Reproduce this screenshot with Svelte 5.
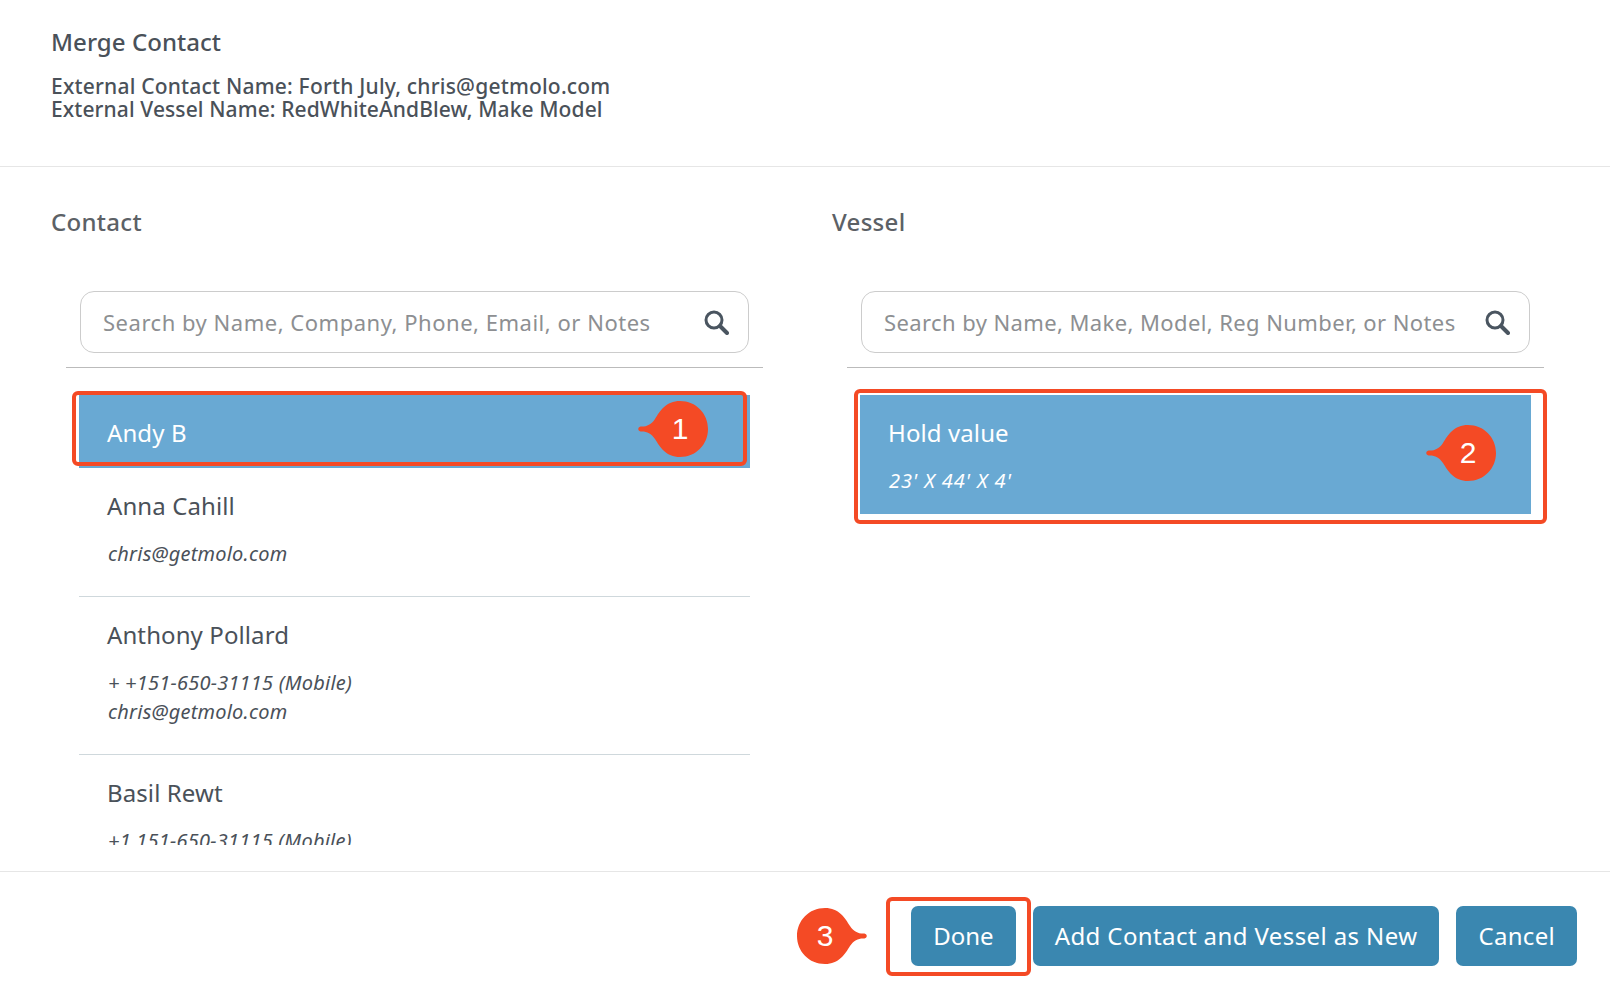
<script>
  const contacts = [
    { name: 'Andy B', lines: [], sel: true },
    { name: 'Anna Cahill', lines: ['chris@getmolo.com'] },
    { name: 'Anthony Pollard', lines: ['+ +151-650-31115 (Mobile)', 'chris@getmolo.com'] },
    { name: 'Basil Rewt', lines: ['+1 151-650-31115 (Mobile)'] }
  ];
  const bubbles = [
    { n: 1, x: 638, y: 401, flip: false },
    { n: 2, x: 1426, y: 425, flip: false },
    { n: 3, x: 797, y: 908, flip: true }
  ];
  const boxes = [
    { x: 72, y: 391, w: 675, h: 75 },
    { x: 854, y: 389, w: 693, h: 135 },
    { x: 886, y: 897, w: 145, h: 79 }
  ];
</script>

<div class="page">
  <header class="head">
    <h1>Merge Contact</h1>
    <p>External Contact Name: Forth July, chris@getmolo.com<br /><span class="second">External Vessel Name: RedWhiteAndBlew, Make Model</span></p>
  </header>

  <main class="cols">
    <section class="col">
      <h2>Contact</h2>
      <div class="search">
        <span class="ph contact-ph">Search by Name, Company, Phone, Email, or Notes</span>
        <svg width="26" height="26" viewBox="0 0 26 26" fill="none" stroke="#4a5560"><circle cx="11" cy="11" r="8" stroke-width="3"/><path d="M17 17l7 7" stroke-width="4" stroke-linecap="round"/></svg>
      </div>
      <div class="rule"></div>
      <ul class="list">
        {#each contacts as c}
          <li class:sel={c.sel} class:plain={!c.sel}>
            <div class="name">{c.name}</div>
            {#if c.lines.length}
              <div class="meta">{#each c.lines as l}<div>{l}</div>{/each}</div>
            {/if}
          </li>
        {/each}
      </ul>
    </section>
    <section class="col">
      <h2>Vessel</h2>
      <div class="search">
        <span class="ph vessel-ph">Search by Name, Make, Model, Reg Number, or Notes</span>
        <svg width="26" height="26" viewBox="0 0 26 26" fill="none" stroke="#4a5560"><circle cx="11" cy="11" r="8" stroke-width="3"/><path d="M17 17l7 7" stroke-width="4" stroke-linecap="round"/></svg>
      </div>
      <div class="rule"></div>
      <ul class="list">
        <li class="sel vessel">
          <div class="name">Hold value</div>
          <div class="meta dims"><div>23' X 44' X 4'</div></div>
        </li>
      </ul>
    </section>
  </main>

  <footer class="foot">
    <button class="done">Done</button>
    <button class="add">Add Contact and Vessel as New</button>
    <button class="cancel">Cancel</button>
  </footer>

  {#each boxes as b}
    <div class="box" style="left:{b.x}px;top:{b.y}px;width:{b.w}px;height:{b.h}px"></div>
  {/each}
  {#each bubbles as b}
    <div class="bubble" style="left:{b.x}px;top:{b.y}px">
      <svg width="70" height="56" viewBox="0 0 70 56" class:flip={b.flip}>
        <path fill="#f44a25" d="M42 0C58 0 70 12.500 70 28S58 56 42 56C28 56 22 46 17 38C13 32 8 30 2.500 30.500C-.5 29.500-.5 26.500 2.500 25.500C8 26 13 24 17 18C22 10 28 0 42 0Z"/>
      </svg>
      <span class:left={b.flip}>{b.n}</span>
    </div>
  {/each}
</div>

<style>
  :global(body) { margin: 0; background: #fff; }
  .page {
    position: relative;
    width: 1610px;
    height: 996px;
    overflow: hidden;
    display: flex;
    flex-direction: column;
    font-family: "Noto Sans", sans-serif;
    color: #4a5159;
  }
  .head {
    height: 167px;
    box-sizing: border-box;
    padding: 26px 51px 0;
    border-bottom: 1px solid #e6e6e6;
    flex: none;
  }
  h1 { margin: 0; font-size: 24px; line-height: 32px; font-weight: 500; letter-spacing: 0.05px; }
  p { margin: 17px 0 0; font-size: 21px; line-height: 23px; font-weight: 500; letter-spacing: 0.2px; }
  .second { letter-spacing: 0.1px; }
  .cols {
    flex: none;
    height: 705px;
    overflow: hidden;
    display: flex;
    box-sizing: border-box;
    padding: 0 0 0 51px;
    gap: 69px;
    border-bottom: 1px solid #e6e6e6;
  }
  .col { width: 712px; flex: none; }
  h2 { margin: 38px 0 0; font-size: 24px; line-height: 34px; font-weight: 500; color: #5c6166; letter-spacing: 0.3px; }
  .search {
    margin: 52px 14px 0 29px;
    height: 62px;
    box-sizing: border-box;
    border: 1px solid #ccc;
    border-radius: 14px;
    display: flex;
    align-items: center;
    justify-content: space-between;
    padding: 0 19px 0 22px;
  }
  .ph { font-size: 22px; color: #8d8f92; white-space: nowrap; }
  .contact-ph { letter-spacing: 0.52px; }
  .vessel-ph { letter-spacing: 0.4px; }
  .rule { margin: 14px 0 0 15px; height: 1px; background: #bbb; }
  .list { list-style: none; margin: 27px 13px 0 28px; padding: 0; height: 450px; overflow: hidden; }
  li { padding: 20px 28px 0; }
  .name { font-size: 24px; line-height: 36px; letter-spacing: 0.1px; }
  .meta { margin-top: 15px; font-size: 20px; line-height: 29px; font-style: italic; letter-spacing: 0.22px; padding-left: 1px; }
  .dims { letter-spacing: 0.9px; }
  .sel { background: #69a9d3; color: #fff; padding-bottom: 17px; }
  .plain { padding-bottom: 28px; border-bottom: 1px solid #cfd8dc; }
  .plain:last-child { border-bottom: 0; }
  .vessel { padding-bottom: 19px; }
  .foot {
    flex: 1;
    display: flex;
    justify-content: flex-end;
    align-items: flex-start;
    gap: 17px;
    padding: 34px 33px 0 0;
  }
  button {
    height: 60px;
    padding: 0 22px 2px;
    border: 0;
    border-radius: 7px;
    background: #3a87b0;
    color: #fff;
    font: 24px "Noto Sans", sans-serif;
    letter-spacing: 0.3px;
  }
  .done { letter-spacing: 0; }
  .add { letter-spacing: 0.4px; }
  .box {
    position: absolute;
    box-sizing: border-box;
    border: 4px solid #f44a25;
    border-radius: 6px;
  }
  .bubble { position: absolute; width: 70px; height: 56px; }
  .bubble svg { display: block; }
  .flip { transform: scaleX(-1); }
  .bubble span {
    position: absolute;
    right: 0;
    top: 0;
    width: 56px;
    text-align: center;
    color: #fff;
    font: 30px/56px "Liberation Sans", sans-serif;
  }
  .bubble span.left { right: auto; left: 0; }
</style>
